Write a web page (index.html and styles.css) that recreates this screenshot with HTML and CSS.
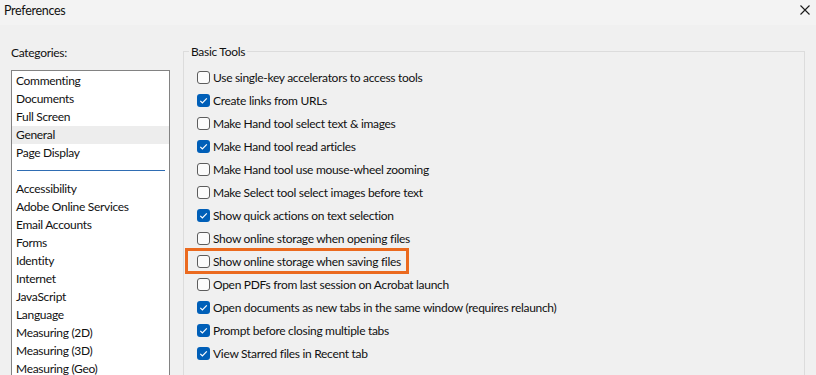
FILE: index.html
```html
<!DOCTYPE html>
<html>
<head>
<meta charset="utf-8">
<link rel="stylesheet" href="styles.css">
</head>
<body>
<div class="titlebar">
  <span class="title">Preferences</span>
  <svg class="close" width="10" height="10" viewBox="0 0 10 10"><path d="M0.5 0.5 L9.5 9.5 M9.5 0.5 L0.5 9.5" stroke="#1a1a1a" stroke-width="1.1" fill="none"/></svg>
</div>
<div class="main">
  <div class="left">
    <div class="cat-label">Categories:</div>
    <div class="listbox">
      <div class="item">Commenting</div>
      <div class="item">Documents</div>
      <div class="item">Full Screen</div>
      <div class="item selected">General</div>
      <div class="item">Page Display</div>
      <div class="sep"></div>
      <div class="item">Accessibility</div>
      <div class="item">Adobe Online Services</div>
      <div class="item">Email Accounts</div>
      <div class="item">Forms</div>
      <div class="item">Identity</div>
      <div class="item">Internet</div>
      <div class="item">JavaScript</div>
      <div class="item">Language</div>
      <div class="item">Measuring (2D)</div>
      <div class="item">Measuring (3D)</div>
      <div class="item">Measuring (Geo)</div>
    </div>
  </div>
  <fieldset class="group">
    <legend>Basic Tools</legend>
    <div class="row"><span class="cb"></span><span>Use single-key accelerators to access tools</span></div>
    <div class="row"><span class="cb on"><svg width="13" height="13" viewBox="0 0 13 13"><path d="M3.3 6.8 L5.4 8.9 L9.8 4.4" stroke="#fff" stroke-width="1.2" fill="none"/></svg></span><span>Create links from URLs</span></div>
    <div class="row"><span class="cb"></span><span>Make Hand tool select text &amp; images</span></div>
    <div class="row"><span class="cb on"><svg width="13" height="13" viewBox="0 0 13 13"><path d="M3.3 6.8 L5.4 8.9 L9.8 4.4" stroke="#fff" stroke-width="1.2" fill="none"/></svg></span><span>Make Hand tool read articles</span></div>
    <div class="row"><span class="cb"></span><span>Make Hand tool use mouse-wheel zooming</span></div>
    <div class="row"><span class="cb"></span><span>Make Select tool select images before text</span></div>
    <div class="row"><span class="cb on"><svg width="13" height="13" viewBox="0 0 13 13"><path d="M3.3 6.8 L5.4 8.9 L9.8 4.4" stroke="#fff" stroke-width="1.2" fill="none"/></svg></span><span>Show quick actions on text selection</span></div>
    <div class="row"><span class="cb"></span><span>Show online storage when opening files</span></div>
    <div class="row highlight"><span class="cb"></span><span>Show online storage when saving files</span></div>
    <div class="row"><span class="cb"></span><span>Open PDFs from last session on Acrobat launch</span></div>
    <div class="row"><span class="cb on"><svg width="13" height="13" viewBox="0 0 13 13"><path d="M3.3 6.8 L5.4 8.9 L9.8 4.4" stroke="#fff" stroke-width="1.2" fill="none"/></svg></span><span>Open documents as new tabs in the same window (requires relaunch)</span></div>
    <div class="row"><span class="cb on"><svg width="13" height="13" viewBox="0 0 13 13"><path d="M3.3 6.8 L5.4 8.9 L9.8 4.4" stroke="#fff" stroke-width="1.2" fill="none"/></svg></span><span>Prompt before closing multiple tabs</span></div>
    <div class="row"><span class="cb on"><svg width="13" height="13" viewBox="0 0 13 13"><path d="M3.3 6.8 L5.4 8.9 L9.8 4.4" stroke="#fff" stroke-width="1.2" fill="none"/></svg></span><span>View Starred files in Recent tab</span></div>
  </fieldset>
</div>
</body>
</html>
```
FILE: styles.css
```css
html, body {
  margin: 0;
  padding: 0;
  background: #f0f0f0;
  overflow: hidden;
  height: 375px;
}
body {
  font-family: Lato, "Open Sans", sans-serif;
  font-size: 12px;
  letter-spacing: -0.3px;
  color: #111111;
}
.titlebar {
  height: 25px;
  background: #f3f3f3;
  display: flex;
  align-items: center;
  justify-content: space-between;
  padding: 0 6px 0 4px;
}
.title {
  font-size: 12.5px;
  line-height: 16px;
  margin-top: -3px;
}
.close {
  display: block;
  margin-top: -5px;
}
.main {
  display: flex;
  align-items: flex-start;
  padding-left: 11px;
}
.left {
  width: 159px;
  padding-top: 20px;
  flex: none;
}
.cat-label {
  line-height: 16px;
  height: 16px;
  margin-bottom: 9px;
}
.listbox {
  background: #ffffff;
  border: 1px solid #828282;
  border-bottom: none;
  height: 320px;
  box-sizing: border-box;
  padding: 1px 0 0 0;
}
.item {
  height: 18px;
  line-height: 18px;
  padding-left: 4px;
  white-space: nowrap;
}
.item.selected {
  background: #ededed;
}
.sep {
  height: 1px;
  background: #2f6db3;
  margin: 8px 4px 9px 5px;
}
.group {
  margin: 17px 0 0 13px;
  padding: 6px 0 0 13px;
  border: 1px solid #dcdcdc;
  width: 622px;
  height: 340px;
  box-sizing: border-box;
  min-width: 0;
  display: flex;
  flex-direction: column;
  align-items: flex-start;
}
.group legend {
  padding: 2px 2px 0 2px;
  margin-left: -8px;
  line-height: 16px;
}
.row {
  height: 23px;
  display: flex;
  align-items: center;
  gap: 3px;
  white-space: nowrap;
  position: relative;
}
.cb {
  width: 13px;
  height: 13px;
  box-sizing: border-box;
  border: 1px solid #5c5c5c;
  border-radius: 3px;
  background: #fbfbfb;
  flex: none;
  display: block;
}
.cb.on {
  border: none;
  background: #005fb8;
}
.cb svg {
  display: block;
}
.highlight::before {
  content: "";
  position: absolute;
  left: -12px;
  right: -8px;
  top: -2px;
  bottom: -1px;
  border: 3px solid #eb6a1f;
}
```
